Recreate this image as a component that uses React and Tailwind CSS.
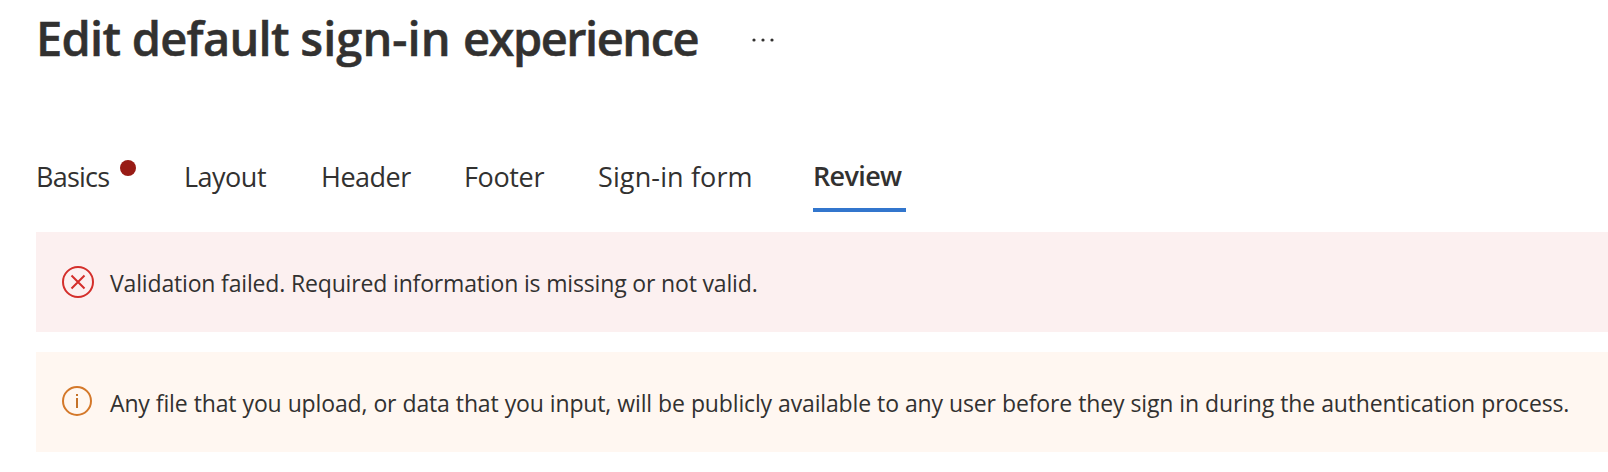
const tabs = [
  { label: 'Basics', cls: 'w-[148px] tracking-[-0.76px]', alert: true },
  { label: 'Layout', cls: 'w-[137px] tracking-[-0.5px]' },
  { label: 'Header', cls: 'w-[143px] tracking-[-0.52px]' },
  { label: 'Footer', cls: 'w-[134px] tracking-[-0.36px]' },
  { label: 'Sign-in form', cls: 'w-[215px] tracking-[0.12px]' },
];

function ErrorIcon() {
  return (
    <svg className="size-8 shrink-0" viewBox="0 0 32 32" fill="none" stroke="#d42f2b" strokeWidth="2">
      <circle cx="16" cy="16" r="15" />
      <path d="M9.5 9.5 22.5 22.5M22.5 9.5 9.5 22.5" />
    </svg>
  );
}

function InfoIcon() {
  return (
    <svg className="mb-[2px] size-[30px] shrink-0" viewBox="0 0 30 30" fill="none">
      <circle cx="15" cy="15" r="14" stroke="#d4782a" strokeWidth="2" />
      <path d="M14 8h2v2h-2zM14 12h2v10h-2z" fill="#c4722a" />
    </svg>
  );
}

function MoreIcon() {
  return (
    <svg className="ml-[52px] mt-[38px] h-1 w-6" viewBox="0 0 24 4" fill="#323130">
      <circle cx="3" cy="2" r="1.6" />
      <circle cx="12" cy="2" r="1.6" />
      <circle cx="21" cy="2" r="1.6" />
    </svg>
  );
}

export default function App() {
  return (
    <main className="h-[472px] overflow-hidden bg-white pl-9 font-['Open_Sans',sans-serif] text-[#323130]">
      <header className="flex h-[76px] items-start">
        <h1 className="w-[663px] whitespace-nowrap text-[47px] leading-[76px] font-semibold tracking-[-0.73px] [-webkit-text-stroke:0.5px_#323130]">
          Edit default <span className="tracking-[0.05px]">sign-in </span>
          <span className="tracking-[-1.48px]">experience</span>
        </h1>
        <button aria-label="More" className="flex">
          <MoreIcon />
        </button>
      </header>

      <nav className="mt-20 flex h-14 items-start whitespace-nowrap text-[27px] leading-10">
        {tabs.map((tab) => (
          <a key={tab.label} className={`flex shrink-0 items-start pt-px ${tab.cls}`}>
            {tab.label}
            {tab.alert && <span className="ml-[11px] mt-[3px] size-4 rounded-full bg-[#981b15]" />}
          </a>
        ))}
        <a className="h-14 w-[93px] border-b-4 border-[#3276cd] font-semibold tracking-[-0.65px]">Review</a>
      </nav>

      <section className="mt-5 flex flex-col gap-5 whitespace-nowrap text-[23px] leading-[34px]">
        <div className="flex h-[100px] items-center bg-[#fcf0f0] pl-[26px]">
          <ErrorIcon />
          <p className="ml-4 pt-px tracking-[-0.16px]">
            Validation failed. Required information is missing or not valid.
          </p>
        </div>
        <div className="flex h-[100px] items-center bg-[#fff7f1] pl-[26px]">
          <InfoIcon />
          <p className="ml-[18px] pt-px tracking-[-0.15px] [word-spacing:0.32px]">
            Any file that you upload, or data that you input, will be publicly available to any user before they sign in
            during the authentication process.
          </p>
        </div>
      </section>
    </main>
  );
}
